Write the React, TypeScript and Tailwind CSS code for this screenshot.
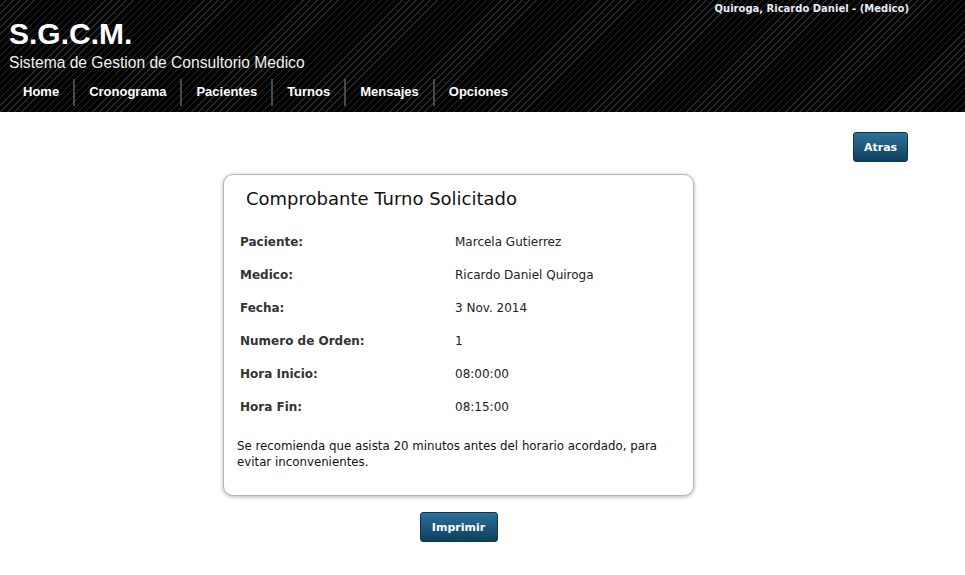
const menu = ['Home', 'Cronograma', 'Pacientes', 'Turnos', 'Mensajes', 'Opciones'];

const datos = [
  { label: 'Paciente:', value: 'Marcela Gutierrez' },
  { label: 'Medico:', value: 'Ricardo Daniel Quiroga' },
  { label: 'Fecha:', value: '3 Nov. 2014' },
  { label: 'Numero de Orden:', value: '1' },
  { label: 'Hora Inicio:', value: '08:00:00' },
  { label: 'Hora Fin:', value: '08:15:00' },
];

const btn =
  'h-[30px] rounded-[3px] border border-[#0d3550] bg-[linear-gradient(#2b729a,#0e3f5e)] px-[10px] pt-[2px] text-[11px] font-bold text-white font-["DejaVu_Sans",Verdana,sans-serif]';

const App = () => {
  return (
    <div className="min-h-[575px] w-[965px] bg-white">
      <header className="h-[112px] bg-[repeating-linear-gradient(135deg,#000_0_4px,#2a2a2a_4px_5px)] font-['Liberation_Sans',Arial,sans-serif]">
        <div className="flex h-[16px] justify-end pr-[56px] pt-[1px] text-[10px] font-bold leading-[16px] text-[#e6ecf5] font-['DejaVu_Sans',Tahoma,sans-serif]">
          Quiroga, Ricardo Daniel - (Medico)
        </div>
        <div className="pl-[9px]">
          <div className="h-[36px] text-[30px] font-bold leading-[36px] text-white">S.G.C.M.</div>
          <div className="h-[22px] text-[15.6px] leading-[22px] text-[#f0f0f0]">
            Sistema de Gestion de Consultorio Medico
          </div>
        </div>
        <nav className="flex h-[28px] items-center pl-[9px] pt-[8px]">
          {menu.map((item, i) => (
            <div key={item} className="flex h-full items-center">
              {i > 0 && <div className="h-[27px] w-[2px] bg-[#4a4a4a]" />}
              <span className="px-[14px] text-[13px] font-bold text-white">{item}</span>
            </div>
          ))}
        </nav>
      </header>

      <main className="font-['DejaVu_Sans',Verdana,sans-serif]">
        <div className="flex justify-end pr-[57px] pt-[20px]">
          <button className={btn + ' w-[55px]'}>Atras</button>
        </div>
        <div className="flex flex-col items-center pl-[223px] pr-[271px] pt-[12px]">
          <section className="w-[471px] rounded-[10px] border border-[#b4b4b4] bg-white pt-[12px] pb-[25px] shadow-[0_1px_4px_rgba(0,0,0,0.3)]">
            <h1 className="pl-[22px] text-[18px] leading-[24px] text-[#111]">Comprobante Turno Solicitado</h1>
            <div className="mt-[14px] pl-[16px]">
              {datos.map((d) => (
                <div key={d.label} className="flex h-[33px] items-center text-[12px] text-[#222]">
                  <span className="w-[215px] font-bold text-[#333]">{d.label}</span>
                  <span>{d.value}</span>
                </div>
              ))}
            </div>
            <p className="mt-[15px] px-[13px] text-[11.8px] leading-[16px] text-[#111]">
              Se recomienda que asista 20 minutos antes del horario acordado, para evitar inconvenientes.
            </p>
          </section>
          <button className={btn + ' mt-[16px] w-[78px]'}>Imprimir</button>
        </div>
      </main>
    </div>
  );
};

export default App;
